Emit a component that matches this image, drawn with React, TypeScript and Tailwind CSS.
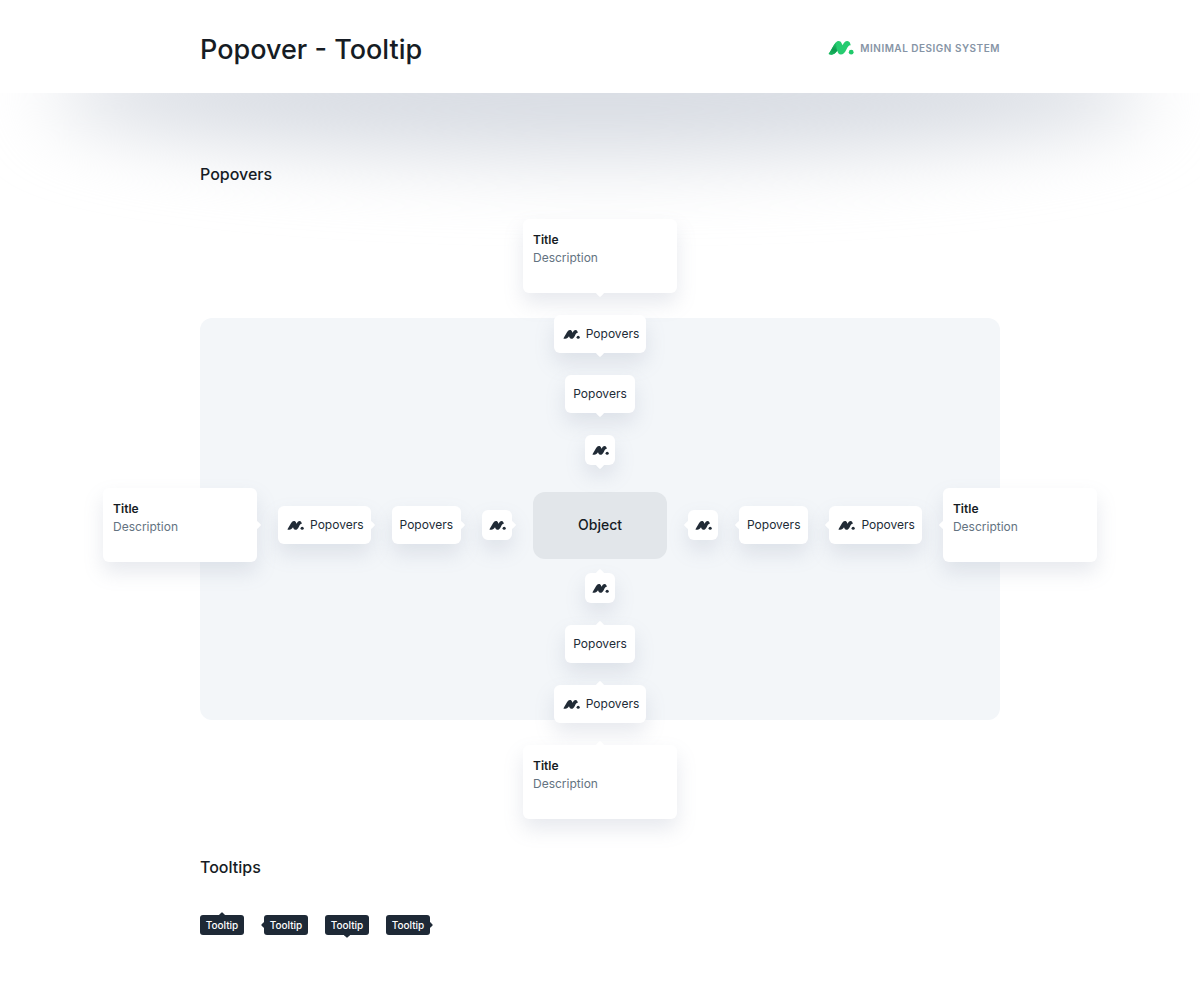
import type { ReactNode } from "react";

type Side = "top" | "right" | "bottom" | "left";

const popoverArrow: Record<Side, string> = {
  top: "left-1/2 -top-1 -translate-x-1/2",
  right: "-right-1 top-1/2 -translate-y-1/2",
  bottom: "left-1/2 -bottom-1 -translate-x-1/2",
  left: "-left-1 top-1/2 -translate-y-1/2",
};

const tooltipArrow: Record<Side, string> = {
  top: "left-1/2 -top-0.5 -translate-x-1/2",
  right: "-right-0.5 top-1/2 -translate-y-1/2",
  bottom: "left-1/2 -bottom-0.5 -translate-x-1/2",
  left: "-left-0.5 top-1/2 -translate-y-1/2",
};

const markPath =
  "M0.6 14C3.2 10 5.6 5 7.8 2.4 9.8 0.4 12.6 0.8 13.6 3.2L14.6 5.2C15.8 3 17 1 19.4 1 21.6 1 22.2 3.2 22.8 5.4 20.8 5 19.8 6.8 18.4 9.4 16.8 12.6 15.2 14.6 12.8 14.6 10.8 14.6 10 12.8 9.2 10.8 7.2 14 4.6 15.6 0.6 14Z";

function Mark({ className }: { className: string }) {
  return (
    <svg viewBox="0 0 26 16" className={className} fill="none" aria-hidden="true">
      <path d={markPath} fill="currentColor" />
      <circle cx="23.2" cy="12.2" r="2.4" fill="currentColor" />
    </svg>
  );
}

function BrandMark() {
  return (
    <svg viewBox="0 0 26 16" className="h-4 w-[26px]" fill="none" aria-hidden="true">
      <defs>
        <linearGradient id="leg" x1="9" y1="3" x2="4" y2="14" gradientUnits="userSpaceOnUse">
          <stop stopColor="#22c96b" />
          <stop offset="0.6" stopColor="#0e9a50" />
          <stop offset="1" stopColor="#18b45d" />
        </linearGradient>
      </defs>
      <path d={markPath} fill="#26cc70" />
      <path d="M0.6 14C3.2 10 5.6 5 7.8 2.4 8.6 5 8.2 8 9.2 10.8 7.2 14 4.6 15.6 0.6 14Z" fill="url(#leg)" />
      <circle cx="23.2" cy="12.2" r="2.4" fill="#1fc96a" />
    </svg>
  );
}

function Popover({ arrow, className, children }: { arrow: Side; className: string; children: ReactNode }) {
  return (
    <div
      className={`relative shrink-0 rounded-md bg-white text-xs text-[#212b36] shadow-[0_10px_20px_rgba(120,135,160,0.18)] ${className}`}
    >
      <span className={`absolute flex size-2 items-center justify-center ${popoverArrow[arrow]}`}>
        <span className="size-[6px] rotate-45 rounded-[1px] bg-white" />
      </span>
      {children}
    </div>
  );
}

function CardPopover({ arrow }: { arrow: Side }) {
  return (
    <Popover arrow={arrow} className="w-[154px] px-2.5 pt-3 pb-[26px] leading-[18px]">
      <h3 className="font-semibold text-[#161c24]">Title</h3>
      <p className="text-[#637381]">Description</p>
    </Popover>
  );
}

function IconTextPopover({ arrow }: { arrow: Side }) {
  return (
    <Popover arrow={arrow} className="flex items-center gap-1.5 py-2.5 pr-[7px] pl-[9px] leading-[18px]">
      <Mark className="h-[11px] w-[17px]" />
      Popovers
    </Popover>
  );
}

function TextPopover({ arrow }: { arrow: Side }) {
  return (
    <Popover arrow={arrow} className="px-2 py-2.5 leading-[18px]">
      Popovers
    </Popover>
  );
}

function IconPopover({ arrow }: { arrow: Side }) {
  return (
    <Popover arrow={arrow} className="flex size-[30px] items-center justify-center">
      <Mark className="h-[11px] w-[17px]" />
    </Popover>
  );
}

function Tooltip({ arrow, className = "" }: { arrow: Side; className?: string }) {
  return (
    <div
      role="tooltip"
      className={`relative w-11 rounded-[3px] bg-[#1e2936] text-center text-[10px] leading-5 font-medium text-white ${className}`}
    >
      <span className={`absolute size-[5px] rotate-45 rounded-[1px] bg-[#1e2936] ${tooltipArrow[arrow]}`} />
      <span className="relative">Tooltip</span>
    </div>
  );
}

export default function App() {
  return (
    <div className="min-h-screen overflow-x-hidden bg-white font-['Inter','Liberation_Sans',sans-serif] text-[#161c24]">
      <header className="relative z-10 bg-white">
        <div className="mx-auto flex max-w-[800px] items-center justify-between pt-[30px] pb-[23px]">
          <h1 className="text-[27px] leading-10 font-medium">Popover - Tooltip</h1>
          <div className="flex items-center gap-1.5 pb-1 text-[#8694a5]">
            <BrandMark />
            <span className="text-[10px] leading-4 font-semibold tracking-wider">MINIMAL DESIGN SYSTEM</span>
          </div>
        </div>
      </header>

      <main className="relative pb-[70px]">
        <div className="pointer-events-none absolute inset-x-0 top-0 h-44 overflow-hidden">
          <div className="mx-auto -mt-16 h-32 w-[92%] rounded-[50%] bg-[#d8dce3] blur-[38px]" />
        </div>

        <section className="relative">
          <h2 className="mx-auto max-w-[800px] pt-[69px] pb-[33px] text-base leading-6 font-medium">Popovers</h2>

          <div className="grid">
            <div className="col-start-1 row-start-1 mx-auto my-[99px] w-full max-w-[800px] rounded-xl bg-[#f3f6f9]" />
            <div className="relative col-start-1 row-start-1 flex flex-col items-center">
              <div className="flex flex-col items-center gap-[22px] pb-[23px]">
                <CardPopover arrow="bottom" />
                <IconTextPopover arrow="bottom" />
                <TextPopover arrow="bottom" />
                <IconPopover arrow="bottom" />
              </div>

              <div className="flex items-center gap-[21px]">
                <CardPopover arrow="right" />
                <IconTextPopover arrow="right" />
                <TextPopover arrow="right" />
                <IconPopover arrow="right" />
                <button type="button" className="h-[67px] w-[134px] shrink-0 rounded-xl bg-[#e2e6ea] text-sm font-medium">
                  Object
                </button>
                <IconPopover arrow="left" />
                <TextPopover arrow="left" />
                <IconTextPopover arrow="left" />
                <CardPopover arrow="left" />
              </div>

              <div className="flex flex-col items-center gap-[22px] pt-[11px]">
                <IconPopover arrow="top" />
                <TextPopover arrow="top" />
                <IconTextPopover arrow="top" />
                <CardPopover arrow="top" />
              </div>
            </div>
          </div>
        </section>

        <section className="relative mx-auto max-w-[800px]">
          <h2 className="pt-9 pb-9 text-base leading-6 font-medium">Tooltips</h2>
          <div className="flex gap-[17px]">
            <Tooltip arrow="top" />
            <Tooltip arrow="left" className="ml-[3px]" />
            <Tooltip arrow="bottom" />
            <Tooltip arrow="right" />
          </div>
        </section>
      </main>
    </div>
  );
}
